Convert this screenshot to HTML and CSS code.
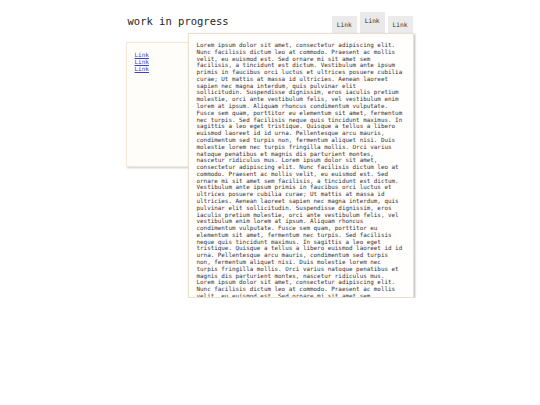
FILE: index.html
```html
<!DOCTYPE html>
<html>
<head>
<meta charset="utf-8">
<link rel="stylesheet" href="styles.css">
</head>
<body>
<div class="page">
  <header class="header">
    <h1 class="title">work in progress</h1>
    <nav class="tabs">
      <a class="tab">Link</a>
      <a class="tab tab-active">Link</a>
      <a class="tab">Link</a>
    </nav>
  </header>
  <div class="body">
    <aside class="sidebar">
      <a class="side-link" href="#">Link</a>
      <a class="side-link" href="#">Link</a>
      <a class="side-link" href="#">Link</a>
    </aside>
    <main class="content">
      <p class="text">Lorem ipsum dolor sit amet, consectetur adipiscing elit. Nunc facilisis dictum leo at commodo. Praesent ac mollis velit, eu euismod est. Sed ornare mi sit amet sem facilisis, a tincidunt est dictum. Vestibulum ante ipsum primis in faucibus orci luctus et ultrices posuere cubilia curae; Ut mattis at massa id ultricies. Aenean laoreet sapien nec magna interdum, quis pulvinar elit sollicitudin. Suspendisse dignissim, eros iaculis pretium molestie, orci ante vestibulum felis, vel vestibulum enim lorem at ipsum. Aliquam rhoncus condimentum vulputate. Fusce sem quam, porttitor eu elementum sit amet, fermentum nec turpis. Sed facilisis neque quis tincidunt maximus. In sagittis a leo eget tristique. Quisque a tellus a libero euismod laoreet id id urna. Pellentesque arcu mauris, condimentum sed turpis non, fermentum aliquet nisi. Duis molestie lorem nec turpis fringilla mollis. Orci varius natoque penatibus et magnis dis parturient montes, nascetur ridiculus mus. Lorem ipsum dolor sit amet, consectetur adipiscing elit. Nunc facilisis dictum leo at commodo. Praesent ac mollis velit, eu euismod est. Sed ornare mi sit amet sem facilisis, a tincidunt est dictum. Vestibulum ante ipsum primis in faucibus orci luctus et ultrices posuere cubilia curae; Ut mattis at massa id ultricies. Aenean laoreet sapien nec magna interdum, quis pulvinar elit sollicitudin. Suspendisse dignissim, eros iaculis pretium molestie, orci ante vestibulum felis, vel vestibulum enim lorem at ipsum. Aliquam rhoncus condimentum vulputate. Fusce sem quam, porttitor eu elementum sit amet, fermentum nec turpis. Sed facilisis neque quis tincidunt maximus. In sagittis a leo eget tristique. Quisque a tellus a libero euismod laoreet id id urna. Pellentesque arcu mauris, condimentum sed turpis non, fermentum aliquet nisi. Duis molestie lorem nec turpis fringilla mollis. Orci varius natoque penatibus et magnis dis parturient montes, nascetur ridiculus mus. Lorem ipsum dolor sit amet, consectetur adipiscing elit. Nunc facilisis dictum leo at commodo. Praesent ac mollis velit, eu euismod est. Sed ornare mi sit amet sem facilisis, a tincidunt est dictum. Vestibulum ante ipsum primis in faucibus orci luctus et ultrices posuere cubilia curae; Ut mattis at massa id ultricies.</p>
    </main>
  </div>
</div>
</body>
</html>
```

FILE: styles.css
```css
html, body {
  margin: 0;
  padding: 0;
  background: #ffffff;
}

body {
  font-family: "DejaVu Sans Mono", monospace;
  color: #222222;
}

.page {
  width: 289px;
  margin: 0 auto;
}

.header {
  display: flex;
  justify-content: space-between;
  align-items: flex-end;
  height: 33px;
}

.title {
  align-self: flex-start;
  margin: 15px 0 0 2px;
  font-size: 10.5px;
  line-height: 12px;
  font-weight: normal;
  color: #1e1e1e;
}

.tabs {
  display: flex;
  align-items: flex-end;
  gap: 3px;
  margin-right: 2px;
}

.tab {
  display: block;
  background: #ebebeb;
  font-size: 6.2px;
  line-height: 7px;
  padding: 4.5px 5px 5.5px;
  color: #333333;
}

.tab-active {
  padding-bottom: 9.5px;
  background: #e9e9e9;
}

.body {
  display: flex;
  align-items: flex-start;
}

.sidebar {
  width: 70px;
  height: 125px;
  box-sizing: border-box;
  margin-top: 9px;
  padding: 8px 8px;
  background: #fffdf9;
  border: 1px solid #f1e8d8;
  box-shadow: 1px 1px 2px rgba(0, 0, 0, 0.2);
  display: flex;
  flex-direction: column;
}

.side-link {
  font-size: 6px;
  line-height: 7px;
  color: #3344cc;
  text-decoration: underline;
}

.content {
  position: relative;
  z-index: 1;
  margin-left: -8px;
  width: 226px;
  height: 265px;
  box-sizing: border-box;
  padding: 8px 8px;
  background: #fffefc;
  border: 1px solid #ebe0cc;
  box-shadow: 1px 1px 2px rgba(0, 0, 0, 0.28);
  overflow: hidden;
}

.text {
  margin: 0;
  font-size: 5.9px;
  line-height: 6.78px;
  color: #333333;
}
```
